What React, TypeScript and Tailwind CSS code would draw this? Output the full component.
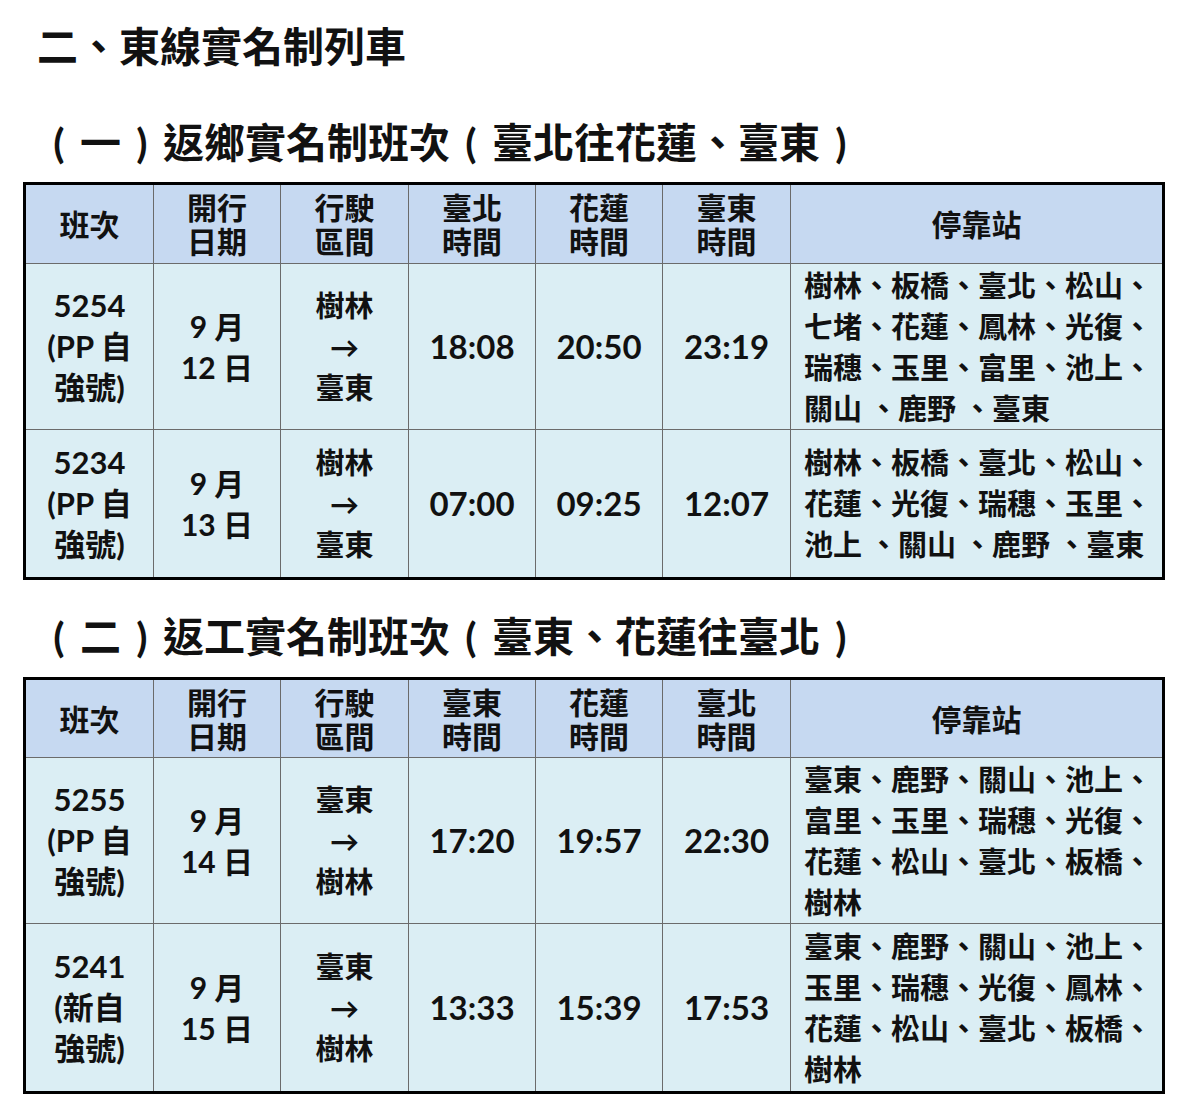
import React from 'react';

type Row = {
  train: string[];
  date: string[];
  route: string[];
  times: string[];
  stops: string[];
  h: string;
};

const table1: Row[] = [
  {
    train: ['5254', '(PP 自', '強號)'],
    date: ['9 月', '12 日'],
    route: ['樹林', '→', '臺東'],
    times: ['18:08', '20:50', '23:19'],
    stops: ['樹林、板橋、臺北、松山、', '七堵、花蓮、鳳林、光復、', '瑞穗、玉里、富里、池上、', '關山 、鹿野 、臺東'],
    h: 'h-[166px]',
  },
  {
    train: ['5234', '(PP 自', '強號)'],
    date: ['9 月', '13 日'],
    route: ['樹林', '→', '臺東'],
    times: ['07:00', '09:25', '12:07'],
    stops: ['樹林、板橋、臺北、松山、', '花蓮、光復、瑞穗、玉里、', '池上 、關山 、鹿野 、臺東'],
    h: 'h-[149px]',
  },
];

const table2: Row[] = [
  {
    train: ['5255', '(PP 自', '強號)'],
    date: ['9 月', '14 日'],
    route: ['臺東', '→', '樹林'],
    times: ['17:20', '19:57', '22:30'],
    stops: ['臺東、鹿野、關山、池上、', '富里、玉里、瑞穗、光復、', '花蓮、松山、臺北、板橋、', '樹林'],
    h: 'h-[166px]',
  },
  {
    train: ['5241', '(新自', '強號)'],
    date: ['9 月', '15 日'],
    route: ['臺東', '→', '樹林'],
    times: ['13:33', '15:39', '17:53'],
    stops: ['臺東、鹿野、關山、池上、', '玉里、瑞穗、光復、鳳林、', '花蓮、松山、臺北、板橋、', '樹林'],
    h: 'h-[169px]',
  },
];

function Lines({ items }: { items: string[] }) {
  return (
    <>
      {items.map((t, i) => (
        <div key={i}>{t}</div>
      ))}
    </>
  );
}

// parenthesis centred in its own em box, as in the original document
function P({ c }: { c: string }) {
  return <span className="inline-block w-[42px] text-center">{c}</span>;
}

function SubTitle({ num, title, route }: { num: string; title: string; route: string }) {
  return (
    <div className="pl-[38px] text-[41px] leading-[46px] whitespace-nowrap">
      <P c="(" />
      {num}
      <P c=")" />
      {title}
      <P c="(" />
      {route}
      <P c=")" />
    </div>
  );
}

function Schedule({ heads, rows, headH }: { heads: string[][]; rows: Row[]; headH: string }) {
  const cell = 'border-[1.5px] border-[#6b6b6b] text-center align-middle';
  return (
    <table className="ml-[23px] w-[1142px] table-fixed border-collapse border-[3px] border-black">
      <colgroup>
        <col className="w-[129px]" />
        <col className="w-[127px]" />
        <col className="w-[128px]" />
        <col className="w-[127px]" />
        <col className="w-[127px]" />
        <col className="w-[128px]" />
        <col />
      </colgroup>
      <thead>
        <tr className={`${headH} bg-[#c6d9f1] text-[30px] leading-[34px]`}>
          {heads.map((h, i) => (
            <th key={i} className={`${cell} font-bold`}>
              <Lines items={h} />
            </th>
          ))}
        </tr>
      </thead>
      <tbody>
        {rows.map((r) => (
          <tr key={r.train[0]} className={`${r.h} bg-[#dbeef4] text-[29px] leading-[41px]`}>
            <td className={`${cell} text-[31px]`}>
              <Lines items={r.train} />
            </td>
            <td className={`${cell} text-[30px]`}>
              <Lines items={r.date} />
            </td>
            <td className={cell}>
              <Lines items={r.route} />
            </td>
            {r.times.map((t) => (
              <td key={t} className={`${cell} text-[33px]`}>
                {t}
              </td>
            ))}
            <td className={`${cell} !text-left pl-[13px] whitespace-nowrap`}>
              <Lines items={r.stops} />
            </td>
          </tr>
        ))}
      </tbody>
    </table>
  );
}

export default function App() {
  return (
    <div
      className="w-[1200px] h-[1115px] bg-white text-[#111] font-bold"
      style={{ fontFamily: '"Lato", "Noto Sans CJK TC", sans-serif' }}
    >
      <div className="pl-[37px] pt-[24px] text-[41px] leading-[46px]">二、東線實名制列車</div>

      <div className="mt-[50px] mb-[16px]">
        <SubTitle num="一" title="返鄉實名制班次" route="臺北往花蓮、臺東" />
      </div>
      <Schedule
        headH="h-[80px]"
        heads={[['班次'], ['開行', '日期'], ['行駛', '區間'], ['臺北', '時間'], ['花蓮', '時間'], ['臺東', '時間'], ['停靠站']]}
        rows={table1}
      />

      <div className="mt-[34px] mb-[17px]">
        <SubTitle num="二" title="返工實名制班次" route="臺東、花蓮往臺北" />
      </div>
      <Schedule
        headH="h-[79px]"
        heads={[['班次'], ['開行', '日期'], ['行駛', '區間'], ['臺東', '時間'], ['花蓮', '時間'], ['臺北', '時間'], ['停靠站']]}
        rows={table2}
      />
    </div>
  );
}
